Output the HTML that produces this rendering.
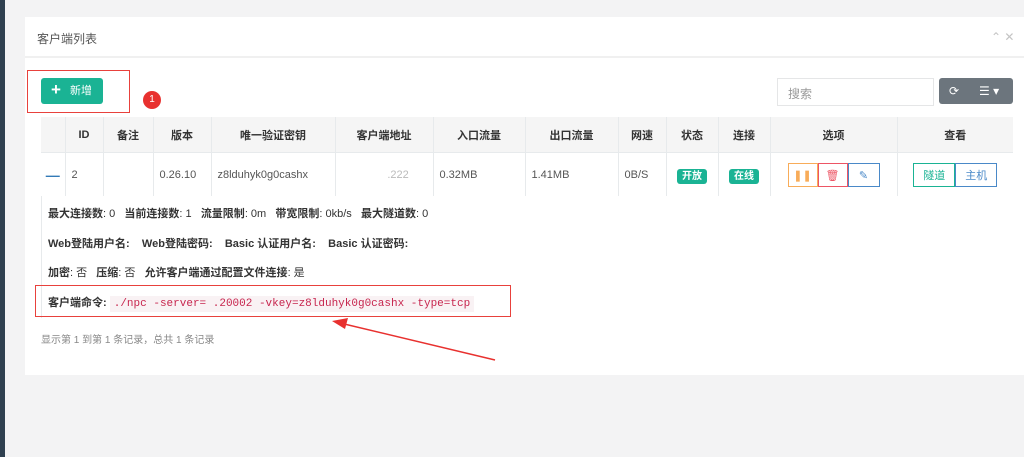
<!DOCTYPE html><html><head><meta charset="utf-8"><style>
body{margin:0;width:1024px;height:457px;background:#f3f3f4;font-family:"Liberation Sans","Noto Sans CJK SC",sans-serif;font-size:11px;color:#676a6c;position:relative;overflow:hidden}
.a{position:absolute}
.side{left:0;top:0;width:5px;height:457px;background:#2f4050}
.panel{left:25px;top:17px;width:999px;height:358px;background:#fff}
.hd{left:25px;top:17px;width:999px;height:39px;border-bottom:2px solid #f0f0f0}
table{border-collapse:collapse;position:absolute;left:41px;top:117px;width:972px;table-layout:fixed}
th{background:#f5f5f5;height:35px;font-weight:bold;color:#333;border-right:1px solid #e7eaec;text-align:center;padding:0}
td{height:43px;border-right:1px solid #e7eaec;border-top:1px solid #e7eaec;padding:0 6px;color:#555;white-space:nowrap;overflow:hidden}
.lab{font-weight:bold;color:#333}
.badge{background:#1ab394;color:#fff;font-weight:bold;font-size:10px;padding:2px 5px;border-radius:3px}
.bt{display:inline-block;height:24px;line-height:24px;border:1px solid;text-align:center;box-sizing:border-box;vertical-align:middle}
</style></head><body>
<div class="a side"></div>
<div class="a panel"></div>
<div class="a hd"></div>
<div class="a" style="left:37px;top:30px;font-size:12px;color:#555">客户端列表</div>
<div class="a" style="left:991px;top:30px;color:#c4c4c4;font-size:12px">&#8963; ✕</div>
<div class="a" style="left:27px;top:70px;width:101px;height:41px;border:1.5px solid #e8413c"></div>
<div class="a" style="left:41px;top:78px;width:62px;height:26px;background:#1ab394;border-radius:3px;color:#fff;line-height:26px;font-size:11px"><b style="font-size:17px;position:absolute;left:10px;top:-1px">+</b><span style="position:absolute;left:29px">新增</span></div>
<div class="a" style="left:143px;top:91px;width:18px;height:18px;border-radius:50%;background:#e8312f;color:#fff;font-size:10px;text-align:center;line-height:18px">1</div>
<div class="a" style="left:777px;top:78px;width:157px;height:28px;border:1px solid #e5e6e7;box-sizing:border-box;padding:6px 10px;color:#999;font-size:12px">搜索</div>
<div class="a" style="left:939px;top:78px;width:74px;height:26px;background:#6c757d;border-radius:3px;color:#fff;font-size:12px;line-height:26px"><span style="position:absolute;left:10px">⟳</span><span style="position:absolute;left:40px">☰ ▾</span></div>
<table>
<colgroup><col style="width:24px"><col style="width:38px"><col style="width:50px"><col style="width:58px"><col style="width:124px"><col style="width:98px"><col style="width:92px"><col style="width:93px"><col style="width:48px"><col style="width:52px"><col style="width:52px"><col style="width:127px"><col style="width:116px"></colgroup>
<tr><th></th><th>ID</th><th>备注</th><th>版本</th><th>唯一验证密钥</th><th>客户端地址</th><th>入口流量</th><th>出口流量</th><th>网速</th><th>状态</th><th>连接</th><th>选项</th><th style="border-right:0">查看</th></tr>
<tr><td style="color:#337ab7;font-weight:bold;font-size:14px;text-align:center;padding:0">—</td><td>2</td><td></td><td>0.26.10</td><td>z8lduhyk0g0cashx</td><td style="color:#bbb">&nbsp;&nbsp;&nbsp;&nbsp;&nbsp;&nbsp;&nbsp;&nbsp;&nbsp;&nbsp;&nbsp;&nbsp;&nbsp;&nbsp;&nbsp;.222</td><td>0.32MB</td><td>1.41MB</td><td>0B/S</td><td style="text-align:center;padding:0"><span class="badge">开放</span></td><td style="text-align:center;padding:0"><span class="badge">在线</span></td>
<td style="text-align:center;padding:0"><span class="bt" style="width:30px;border-color:#f8ac59;color:#f8ac59">❚❚</span><span class="bt" style="width:30px;border-color:#ed5565;color:#ed5565">🗑</span><span class="bt" style="width:32px;border-color:#4a89c8;color:#4a89c8">✎</span></td>
<td style="text-align:center;border-right:0;padding:0"><span class="bt" style="width:42px;border-color:#1ab394;color:#1ab394">隧道</span><span class="bt" style="width:42px;border-color:#4a89c8;color:#4a89c8">主机</span></td></tr>
</table>
<div class="a" style="left:41px;top:196px;width:1px;height:122px;background:#e7eaec"></div>
<div class="a" style="left:48px;top:205px;color:#333"><span class="lab">最大连接数</span>: 0 &nbsp; <span class="lab">当前连接数</span>: 1 &nbsp; <span class="lab">流量限制</span>: 0m &nbsp; <span class="lab">带宽限制</span>: 0kb/s &nbsp; <span class="lab">最大隧道数</span>: 0</div>
<div class="a" style="left:48px;top:235px"><span class="lab">Web登陆用户名:</span> &nbsp;&nbsp; <span class="lab">Web登陆密码:</span> &nbsp;&nbsp; <span class="lab">Basic 认证用户名:</span> &nbsp;&nbsp; <span class="lab">Basic 认证密码:</span></div>
<div class="a" style="left:48px;top:264px;color:#333"><span class="lab">加密</span>: 否 &nbsp; <span class="lab">压缩</span>: 否 &nbsp; <span class="lab">允许客户端通过配置文件连接</span>: 是</div>
<div class="a" style="left:35px;top:285px;width:474px;height:30px;border:1.5px solid #e8413c"></div>
<div class="a" style="left:48px;top:294px"><span class="lab">客户端命令:</span> <span style="font-family:'Liberation Mono',monospace;color:#c7254e;background:#f9f2f4;padding:2px 4px;font-size:11px">./npc -server=       .20002 -vkey=z8lduhyk0g0cashx -type=tcp</span></div>
<div class="a" style="left:41px;top:331px;color:#888;font-size:10px">显示第 1 到第 1 条记录，总共 1 条记录</div>
<svg class="a" style="left:0;top:0" width="1024" height="457"><line x1="495" y1="360" x2="340" y2="323" stroke="#e8312f" stroke-width="1.5"/><polygon points="332,321 348,318 345,329" fill="#e8312f"/></svg>
</body></html>
